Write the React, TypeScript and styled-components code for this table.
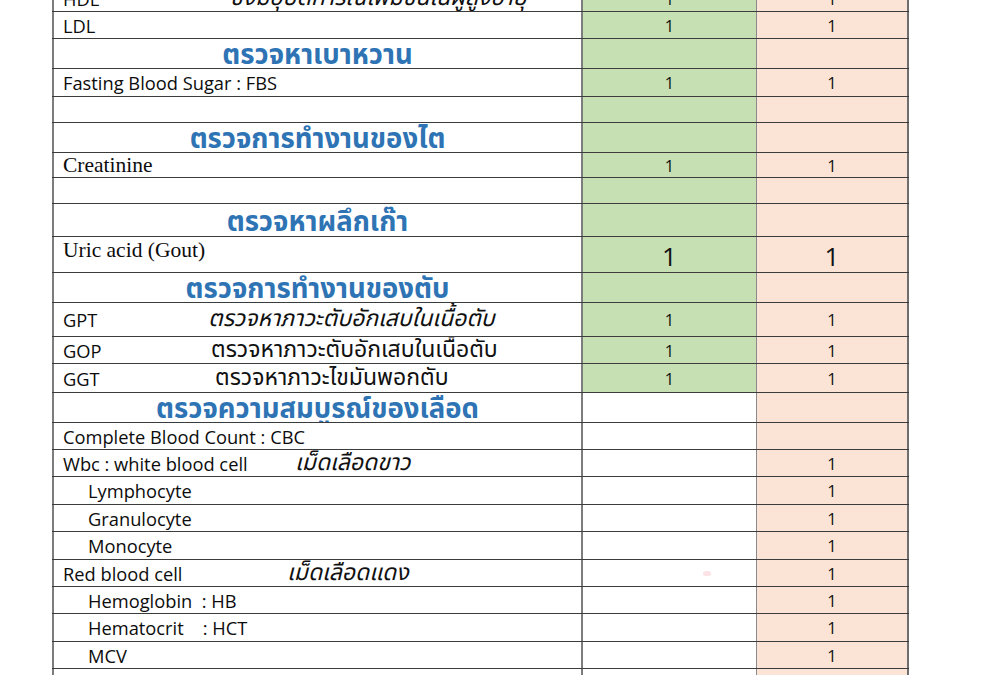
import React from "react";
import styled, { createGlobalStyle, css } from "styled-components";

const GlobalStyle = createGlobalStyle`
    html, body {
        margin: 0;
        padding: 0;
        background: #ffffff;
        overflow: hidden;
    }
    body {
        font-family: "Open Sans", "Noto Sans Thai", "Noto Sans", sans-serif;
        color: #111;
    }
`;

type Kind = "item" | "header" | "blank";

interface RowData {
    kind: Kind;
    h: number;
    label?: string;
    note?: string;
    noteItalic?: boolean;
    labelWidth?: number;
    indent?: boolean;
    serif?: boolean;
    top?: boolean;
    green?: boolean;
    a?: string;
    b?: string;
    big?: boolean;
}

const rows: RowData[] = [
    { kind: "item", h: 27, label: "HDL", note: "ซึ่งมีอุบัติการณ์เพิ่มขึ้นในผู้สูงอายุ", noteItalic: true, labelWidth: 167, green: true, a: "1", b: "1" },
    { kind: "item", h: 27, label: "LDL", green: true, a: "1", b: "1" },
    { kind: "header", h: 30, label: "ตรวจหาเบาหวาน", green: true },
    { kind: "item", h: 28, label: "Fasting Blood Sugar : FBS", green: true, a: "1", b: "1" },
    { kind: "blank", h: 26, green: true },
    { kind: "header", h: 30, label: "ตรวจการทำงานของไต", green: true },
    { kind: "item", h: 25, label: "Creatinine", serif: true, green: true, a: "1", b: "1" },
    { kind: "blank", h: 26, green: true },
    { kind: "header", h: 33, label: "ตรวจหาผลึกเก๊า", green: true },
    { kind: "item", h: 36, label: "Uric acid (Gout)", serif: true, top: true, green: true, a: "1", b: "1", big: true },
    { kind: "header", h: 30, label: "ตรวจการทำงานของตับ", green: true },
    { kind: "item", h: 34, label: "GPT", note: "ตรวจหาภาวะตับอักเสบในเนื้อตับ", noteItalic: true, labelWidth: 145, green: true, a: "1", b: "1" },
    { kind: "item", h: 27, label: "GOP", note: "ตรวจหาภาวะตับอักเสบในเนื้อตับ", labelWidth: 148, green: true, a: "1", b: "1" },
    { kind: "item", h: 29, label: "GGT", note: "ตรวจหาภาวะไขมันพอกตับ", labelWidth: 152, green: true, a: "1", b: "1" },
    { kind: "header", h: 30, label: "ตรวจความสมบูรณ์ของเลือด" },
    { kind: "item", h: 27, label: "Complete Blood Count : CBC" },
    { kind: "item", h: 27, label: "Wbc : white blood cell", note: "เม็ดเลือดขาว", noteItalic: true, labelWidth: 232, b: "1" },
    { kind: "item", h: 28, label: "Lymphocyte", indent: true, b: "1" },
    { kind: "item", h: 27, label: "Granulocyte", indent: true, b: "1" },
    { kind: "item", h: 28, label: "Monocyte", indent: true, b: "1" },
    { kind: "item", h: 27, label: "Red blood cell", note: "เม็ดเลือดแดง", noteItalic: true, labelWidth: 224, b: "1" },
    { kind: "item", h: 27, label: "Hemoglobin  : HB", indent: true, b: "1" },
    { kind: "item", h: 28, label: "Hematocrit    : HCT", indent: true, b: "1" },
    { kind: "item", h: 27, label: "MCV", indent: true, b: "1" },
    { kind: "item", h: 28, label: "MCH", indent: true, b: "1" },
];

const App: React.FC = () => {
    return (
        <>
            <GlobalStyle />
            <Sheet>
                {rows.map((r, i) => (
                    <Row key={i} h={r.h}>
                        <NameCell top={r.top} center={r.kind === "header"}>
                            {r.kind === "header" && <Heading>{r.label}</Heading>}
                            {r.kind === "item" && (
                                <>
                                    <Label serif={r.serif} indent={r.indent} w={r.note ? r.labelWidth : undefined}>
                                        {r.label}
                                    </Label>
                                    {r.note && <Note italic={r.noteItalic}>{r.note}</Note>}
                                </>
                            )}
                        </NameCell>
                        <ValueCell tone={r.green ? "green" : "white"}>
                            {r.a && <Value big={r.big}>{r.a}</Value>}
                            {i === 20 && <Speck />}
                        </ValueCell>
                        <ValueCell tone="peach" last>
                            {r.b && <Value big={r.big}>{r.b}</Value>}
                        </ValueCell>
                    </Row>
                ))}
            </Sheet>
        </>
    );
};

export default App;

const Sheet = styled.div`
    margin: -15px 0 0 52px;
    width: 857px;
    display: flex;
    flex-direction: column;
`;

const Row = styled.div<{ h: number }>`
    display: grid;
    grid-template-columns: 531px 174px 152px;
    height: ${(p) => p.h}px;
    box-sizing: border-box;
    border-bottom: 1px solid #3c3c3c;
`;

const NameCell = styled.div<{ top?: boolean; center?: boolean }>`
    display: flex;
    align-items: center;
    padding: 2px 0 0 9px;
    border-left: 2px solid #7d7d7d;
    border-right: 2px solid #7d7d7d;
    box-sizing: border-box;
    overflow: hidden;
    white-space: pre;
    ${(p) => p.top && css`
        align-items: flex-start;
        padding-top: 3px;
    `}
    ${(p) => p.center && css`
        justify-content: center;
        padding: 5px 0 0 0;
    `}
`;

const Heading = styled.span`
    font-family: "Noto Sans Thai", "Noto Sans Thai Looped", "Open Sans", sans-serif;
    font-weight: 700;
    font-size: 27.5px;
    color: #2e74b5;
    line-height: 1;
`;

const Label = styled.span<{ serif?: boolean; indent?: boolean; w?: number }>`
    font-size: 18.3px;
    line-height: 1;
    flex: none;
    color: #0c0c0c;
    ${(p) => p.w && css`
        width: ${p.w}px;
    `}
    ${(p) => p.indent && css`
        margin-left: 25px;
    `}
    ${(p) => p.serif && css`
        font-family: "Liberation Serif", "Times New Roman", serif;
        font-size: 21.5px;
    `}
`;

const Note = styled.span<{ italic?: boolean }>`
    font-family: "Noto Sans Thai", "Open Sans", sans-serif;
    font-size: 23px;
    line-height: 1;
    margin-top: -2px;
    font-style: ${(p) => (p.italic ? "italic" : "normal")};
`;

const tones = {
    green: "#c6e0b4",
    peach: "#fbe4d5",
    white: "#ffffff",
};

const ValueCell = styled.div<{ tone: keyof typeof tones; last?: boolean }>`
    position: relative;
    display: flex;
    align-items: center;
    justify-content: center;
    padding-top: 2px;
    background: ${(p) => tones[p.tone]};
    border-right: ${(p) => (p.last ? "2px solid #6e6e6e" : "1px solid #8a8a8a")};
    box-sizing: border-box;
`;

const Value = styled.span<{ big?: boolean }>`
    font-size: ${(p) => (p.big ? "26px" : "16.5px")};
    line-height: 1;
`;

const Speck = styled.span`
    position: absolute;
    left: 120px;
    top: 11px;
    width: 8px;
    height: 5px;
    border-radius: 3px;
    background: #fbe3e6;
`;
